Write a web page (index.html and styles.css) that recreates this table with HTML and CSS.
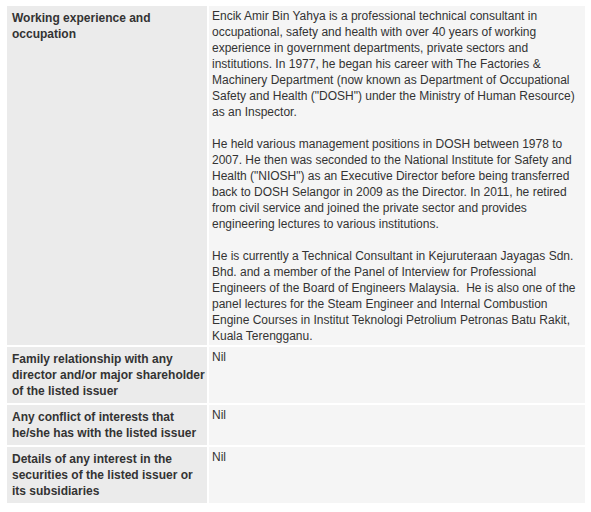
FILE: index.html
```html
<!DOCTYPE html>
<html lang="en">
<head>
<meta charset="utf-8">
<title>Director profile</title>
<link rel="stylesheet" href="styles.css">
</head>
<body>
<table class="profile">
  <colgroup>
    <col class="col-label">
    <col class="col-value">
  </colgroup>
  <tbody>
    <tr>
      <td class="label">Working experience and occupation</td>
      <td class="value">Encik Amir Bin Yahya is a professional technical consultant in occupational, safety and health with over 40 years of working experience in government departments, private sectors and institutions. In 1977, he began his career with The Factories &amp; Machinery Department (now known as Department of Occupational Safety and Health ("DOSH") under the Ministry of Human Resource) as an Inspector.<br><br>He held various management positions in DOSH between 1978 to 2007. He then was seconded to the National Institute for Safety and Health ("NIOSH") as an Executive Director before being transferred back to DOSH Selangor in 2009 as the Director. In 2011, he retired from civil service and joined the private sector and provides engineering lectures to various institutions.<br><br>He is currently a Technical Consultant in Kejuruteraan Jayagas Sdn. Bhd. and a member of the Panel of Interview for Professional Engineers of the Board of Engineers Malaysia.&nbsp; He is also one of the panel lectures for the Steam Engineer and Internal Combustion Engine Courses in Institut Teknologi Petrolium Petronas Batu Rakit, Kuala Terengganu.</td>
    </tr>
    <tr>
      <td class="label">Family relationship with any director and/or major shareholder of the listed issuer</td>
      <td class="value">Nil</td>
    </tr>
    <tr>
      <td class="label">Any conflict of interests that he/she has with the listed issuer</td>
      <td class="value">Nil</td>
    </tr>
    <tr>
      <td class="label">Details of any interest in the securities of the listed issuer or its subsidiaries</td>
      <td class="value">Nil</td>
    </tr>
  </tbody>
</table>
</body>
</html>
```
FILE: styles.css
```css
html, body {
  margin: 0;
  background: #ffffff;
}

body {
  padding: 4px 5px;
  font-family: "Liberation Sans", Arial, sans-serif;
  font-size: 12px;
  line-height: 16px;
  color: #333333;
}

.profile {
  width: 582px;
  table-layout: fixed;
  border-collapse: separate;
  border-spacing: 2px;
}

.col-label {
  width: 200px;
}

.profile td {
  box-sizing: border-box;
  vertical-align: top;
}

.label {
  background: #ebebeb;
  font-weight: bold;
  padding: 4px 0 4px 5px;
}

.value {
  background: #f5f5f5;
  padding: 2px 3px 1px 3px;
}
```
